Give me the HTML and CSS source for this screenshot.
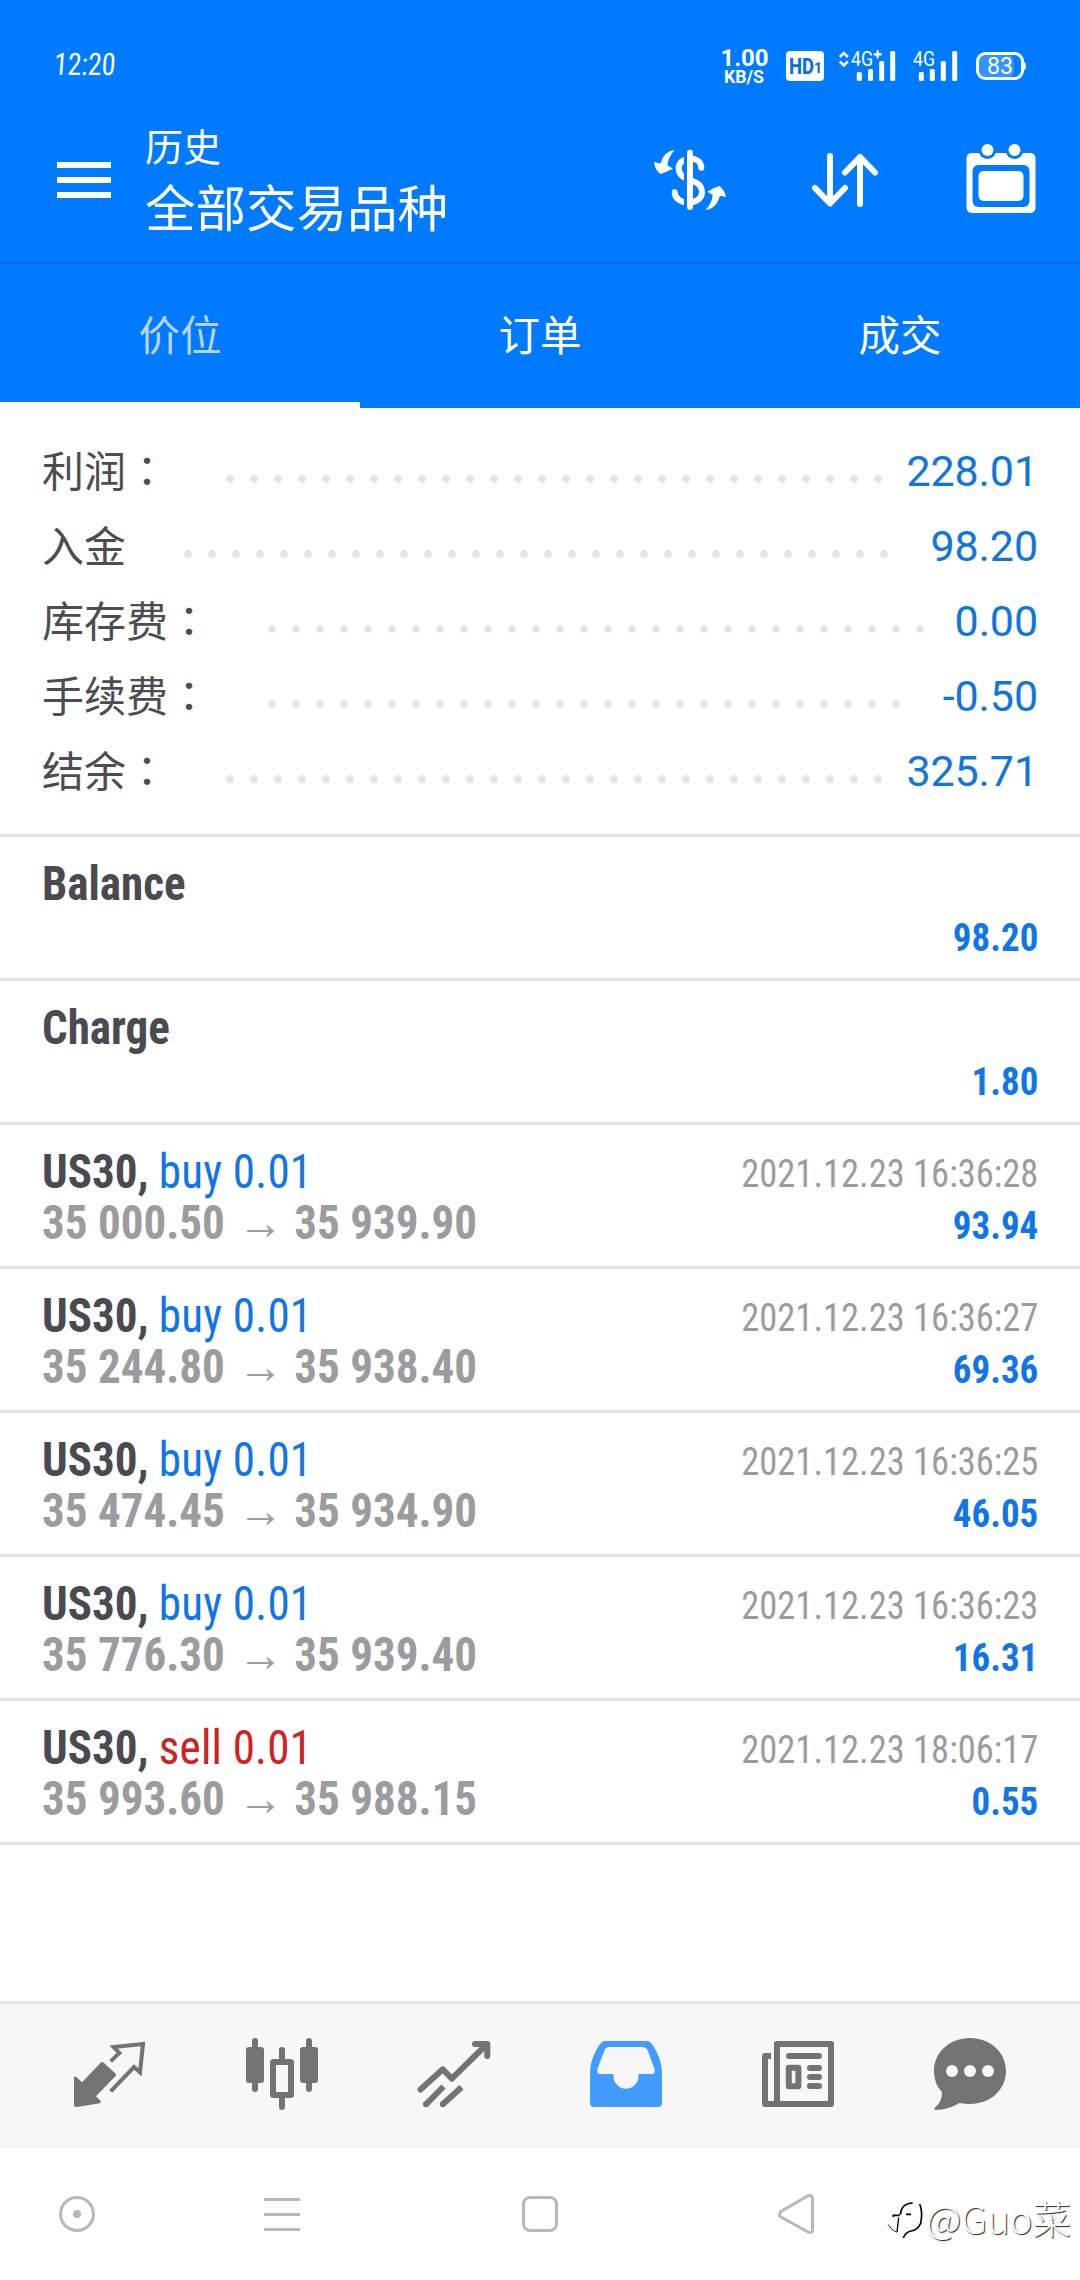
FILE: index.html
```html
<!DOCTYPE html>
<html lang="zh-CN">
<head>
<meta charset="utf-8">
<title>历史</title>
<link rel="stylesheet" href="styles.css">
</head>
<body>
<div class="screen">
  <header class="top">
    <div class="status">
      <span class="clock">12:20</span>
      <svg class="status-icons" width="310" height="50" viewBox="0 0 310 50">
        <g fill="#fff" font-family="Roboto, sans-serif">
          <text x="0.500" y="25.700" font-size="24" font-weight="700" textLength="48">1.00</text>
          <text x="4" y="43" font-size="18" font-weight="700" textLength="40" lengthAdjust="spacingAndGlyphs">KB/S</text>
          <rect x="66" y="11" width="38" height="30" rx="4"/>
          <text x="69" y="33.700" font-size="22" font-weight="800" fill="#0672e0" textLength="25" lengthAdjust="spacingAndGlyphs">HD</text>
          <text x="94" y="32.500" font-size="14" font-weight="800" fill="#0672e0">1</text>
          <path d="M119.800 17l4-4 4 4M119.800 21.500l4 4 4-4" fill="none" stroke="#fff" stroke-width="2.500"/>
          <text x="131" y="25.700" font-size="20" textLength="22" lengthAdjust="spacingAndGlyphs">4G</text>
          <path d="M157.700 10.300v8M153.700 14.300h8" stroke="#fff" stroke-width="2.200"/>
          <rect x="136.800" y="32" width="5" height="9" rx="1.500"/>
          <rect x="148" y="29" width="5" height="12" rx="1.500"/>
          <rect x="159.200" y="21" width="5" height="20" rx="1.500"/>
          <rect x="170.200" y="11" width="5" height="30" rx="1.500"/>
          <text x="193" y="25.700" font-size="20" textLength="22" lengthAdjust="spacingAndGlyphs">4G</text>
          <rect x="198.800" y="32" width="5" height="9" rx="1.500"/>
          <rect x="209.800" y="29" width="5" height="12" rx="1.500"/>
          <rect x="220.800" y="21" width="5" height="20" rx="1.500"/>
          <rect x="232.200" y="11" width="5" height="30" rx="1.500"/>
          <rect x="258" y="14" width="36" height="24" rx="7" opacity=".2"/>
          <rect x="257.500" y="13.500" width="45" height="25" rx="8" fill="none" stroke="#fff" stroke-width="3"/>
          <path d="M304 21.500q2 1 2 4.500t-2 4.500z"/>
          <text x="267" y="33.500" font-size="23" textLength="26" lengthAdjust="spacingAndGlyphs">83</text>
        </g>
      </svg>
    </div>
    <div class="appbar">
      <svg class="menu" width="54" height="36" viewBox="0 0 54 36" fill="#fff"><path d="M0 0h54v6H0zM0 15h54v6H0zM0 30h54v6H0z"/></svg>
      <div class="titles">
        <div class="subtitle">历史</div>
        <div class="title">全部交易品种</div>
      </div>
      <div class="actions">
        <svg width="78" height="78" viewBox="33 18 234 234">
          <path d="M184 98C184 60 116 62 116 100C116 145 186 125 186 172C186 212 106 214 104 172" fill="none" stroke="#fff" stroke-width="18" stroke-linecap="round"/>
          <path d="M132 50h9v170h-9z" fill="#007aff"/>
          <path d="M150 53v163" stroke="#fff" stroke-width="18" stroke-linecap="round"/>
          <path d="M104 45Q72 48 61 86L42 80Q44 105 62 117Q80 110 99 101L82 91Q85 65 104 45ZM197 224Q228 222 240 182L258 186Q254 165 238 153Q220 158 202 170L218 180Q216 205 197 224Z" fill="#fff"/>
        </svg>
        <svg width="78" height="78" viewBox="807 141 78 78" fill="none" stroke="#fff" stroke-width="6" stroke-linecap="round" stroke-linejoin="round">
          <path d="M831 156v47M816 188l15 15.500 15-15.500M861 204v-47M846 172.500l15-15.500 15 15.500"/>
        </svg>
        <svg width="78" height="78" viewBox="961.500 141 78 78">
          <rect x="966" y="153" width="69" height="60" rx="5" fill="#fff"/>
          <g fill="#007aff"><circle cx="987" cy="150" r="9"/><circle cx="1014" cy="150" r="9"/><rect x="972" y="165" width="57" height="42" rx="6"/></g>
          <g fill="#fff"><circle cx="987" cy="150" r="6"/><circle cx="1014" cy="150" r="6"/><rect x="978" y="171" width="45" height="30" rx="5"/></g>
        </svg>
      </div>
    </div>
    <nav class="tabs">
      <a class="tab active">价位</a>
      <a class="tab">订单</a>
      <a class="tab">成交</a>
    </nav>
  </header>

  <section class="summary">
    <div class="sum"><span class="label">利润<span lang="zh-Hant">：</span></span><i class="dots" style="width:672px"></i><span class="num">228.01</span></div>
    <div class="sum"><span class="label">入金</span><i class="dots" style="width:720px"></i><span class="num">98.20</span></div>
    <div class="sum"><span class="label">库存费<span lang="zh-Hant">：</span></span><i class="dots" style="width:672px"></i><span class="num">0.00</span></div>
    <div class="sum"><span class="label">手续费<span lang="zh-Hant">：</span></span><i class="dots" style="width:648px"></i><span class="num">-0.50</span></div>
    <div class="sum"><span class="label">结余<span lang="zh-Hant">：</span></span><i class="dots" style="width:672px"></i><span class="num">325.71</span></div>
  </section>

  <main class="deals">
    <article class="deal"><div class="left"><div><b>Balance</b></div></div><div class="right"><div class="time"></div><div class="profit">98.20</div></div></article>
    <article class="deal"><div class="left"><div><b>Charge</b></div></div><div class="right"><div class="time"></div><div class="profit">1.80</div></div></article>
    <article class="deal"><div class="left"><div><b>US30,</b> <span class="buy">buy 0.01</span></div><div class="price">35 000.50 <span class="to">→</span> 35 939.90</div></div><div class="right"><div class="time">2021.12.23 16:36:28</div><div class="profit">93.94</div></div></article>
    <article class="deal"><div class="left"><div><b>US30,</b> <span class="buy">buy 0.01</span></div><div class="price">35 244.80 <span class="to">→</span> 35 938.40</div></div><div class="right"><div class="time">2021.12.23 16:36:27</div><div class="profit">69.36</div></div></article>
    <article class="deal"><div class="left"><div><b>US30,</b> <span class="buy">buy 0.01</span></div><div class="price">35 474.45 <span class="to">→</span> 35 934.90</div></div><div class="right"><div class="time">2021.12.23 16:36:25</div><div class="profit">46.05</div></div></article>
    <article class="deal"><div class="left"><div><b>US30,</b> <span class="buy">buy 0.01</span></div><div class="price">35 776.30 <span class="to">→</span> 35 939.40</div></div><div class="right"><div class="time">2021.12.23 16:36:23</div><div class="profit">16.31</div></div></article>
    <article class="deal"><div class="left"><div><b>US30,</b> <span class="sell">sell 0.01</span></div><div class="price">35 993.60 <span class="to">→</span> 35 988.15</div></div><div class="right"><div class="time">2021.12.23 18:06:17</div><div class="profit">0.55</div></div></article>
  </main>

  <nav class="bottom">
    <svg viewBox="-39 -39 78 78"><g transform="translate(-50 -46) scale(.33333)">
      <path d="M42 140L48 140L66 157L122 98Q127 94 131 98L167 131Q170 135 166 139L108 199L123 214L120 220L50 231Q42 231 42 224Z" fill="#737373"/>
      <path d="M152 94L178 69L161 51L249 42L240 127L222 111L152 184" fill="none" stroke="#737373" stroke-width="12" stroke-miterlimit="10"/></g></svg>
    <svg viewBox="-39 -39 78 78" fill="none" stroke="#737373" stroke-width="6" stroke-linecap="round"><g fill="#737373" stroke="none"><rect x="-36" y="-29" width="18" height="36" rx="3"/><rect x="18" y="-29" width="18" height="36" rx="3"/></g><path d="M-27-35V13M27-35V13M0-26V-16M0 21V31"/><rect x="-9" y="-14" width="18" height="33" rx=".5" stroke-linejoin="round"/></svg>
    <svg viewBox="-39 -39 78 78" fill="none" stroke="#737373" stroke-width="6" stroke-linejoin="round"><path d="M-33.500 13.500L-11.200-6.700L-2.200 2.700L32-31M21-32H33.300V-20" stroke-linecap="round"/><path d="M-28 28.300L-10.500 10.500M-11.200 28.300L7.500 11.200"/><g fill="#737373" stroke="none"><circle cx="-28" cy="28.300" r="3"/><circle cx="-11.200" cy="28.300" r="3"/></g></svg>
    <svg viewBox="-39 -39 78 78" fill="#429bff"><path fill-rule="evenodd" d="M-36-3C-36-15-30-27-25-33Q-24-35-21-35H21Q24-35 25-33C30-27 36-15 36-3V27Q36 31 32 31H-32Q-36 31-36 27ZM-16-29Q-20-29-21.500-26L-28.500-7Q-29.500-2-26-2H-12.500V0A12.500 12.700 0 0 0 12.500 0V-2H26Q29.500-2 28.500-7L21.500-26Q20-29 16-29Z"/></svg>
    <svg viewBox="-39 -39 78 78" fill="none" stroke="#737373" stroke-width="6" stroke-linejoin="round"><rect x="-21" y="-32" width="54" height="60"/><path d="M-27-20H-33V28H-21"/><path d="M-9-20H21M12-8H21M12 1H21M12 10H21" stroke-linecap="round"/><rect x="-9.200" y="-8.200" width="9.600" height="18.400"/></svg>
    <svg viewBox="-39 -39 78 78" fill="#737373"><path d="M0-38C20-38 36-24 36-5S20 28 0 28Q-5 28-10.500 27Q-22 34-34 34Q-37 33-34.500 31Q-28 26-28 16Q-36 8-36-5C-36-24-20-38 0-38Z"/><g fill="#f7f7f7"><circle cx="-18" cy="-5" r="6"/><circle cy="-5" r="6"/><circle cx="18" cy="-5" r="6"/></g></svg>
  </nav>

  <footer class="sysnav">
    <svg viewBox="-24 -24 48 48"><circle r="16.500"/><circle r="4" fill="#b8b8b8" stroke="none"/></svg>
    <svg viewBox="-24 -24 48 48"><path d="M-18-14.500H18M-18 .5H18M-18 15.500H18"/></svg>
    <svg viewBox="-24 -24 48 48"><rect x="-16.500" y="-16.500" width="33" height="33" rx="6.500"/></svg>
    <svg viewBox="-24 -24 48 48"><path d="M12-18.300Q16.500-19.500 16.500-15V15.500Q16.500 20 12 18L-15 3Q-18 .5-15-2.500Z"/></svg>
    <div class="watermark">
      <svg width="38" height="42" viewBox="32 45 114 126" fill="none" stroke="#000" stroke-width="5"><path d="M75 89Q78 55 112 54M54 96V91H73M92 88H107"/><path d="M133 57Q143 80 136 115Q126 136 107 138Q90 142 84 159" /><path d="M70 98L65 141" stroke-width="4"/><path d="M65 142Q50 138 38 118" stroke-width="2.500"/></svg>
      <span>@Guo菜</span>
    </div>
  </footer>
</div>
</body>
</html>
```

FILE: styles.css
```css
* { box-sizing: border-box; }

body {
  margin: 0;
  background: #fff;
  font-family: Roboto, "Noto Sans CJK SC", sans-serif;
}

.screen {
  display: flex;
  flex-direction: column;
  width: 1080px;
  height: 2280px;
  background: #fefefe;
}

.top { background: #007aff; color: #fff; }

.status {
  display: flex;
  justify-content: space-between;
  align-items: flex-start;
  height: 108px;
  padding: 40px 50px 0 54px;
}

.clock {
  font-size: 31px;
  line-height: 49px;
  font-stretch: 75%;
  transform: skewX(-4deg) scaleX(.9);
  transform-origin: left;
}

.appbar {
  display: flex;
  height: 156px;
  padding: 0 40.5px 0 57px;
  border-bottom: 3px solid #0070ea;
}

.menu { margin: 54px 34px 0 0; }

.titles { font-family: "Noto Sans CJK SC", sans-serif; white-space: nowrap; }
.subtitle { margin-top: 10px; font-size: 38px; line-height: 54px; }
.title { margin-top: 3px; font-size: 50.500px; line-height: 60px; }

.actions {
  display: flex;
  gap: 77.500px;
  margin: 33px 0 0 auto;
}

.tabs { display: grid; grid-template-columns: repeat(3, 1fr); height: 144px; }

.tab {
  font: 41.500px/138px "Noto Sans CJK SC", sans-serif;
  text-align: center;
  border-bottom: 6px solid transparent;
}

.tab.active { color: #b9d3f3; border-bottom-color: #fff; }

.summary { height: 426px; padding: 24px 42px 0; }

.sum { display: flex; align-items: center; height: 75px; }

.label {
  padding-bottom: 2px;
  font: 42px/73px "Noto Sans CJK SC", sans-serif;
  color: #4d4c52;
}

.label [lang] { font-family: "Noto Sans CJK TC", sans-serif; }

.dots {
  height: 12px;
  margin: 18px 0 0 50px;
  background: radial-gradient(circle, #e4e4e4 3.600px, transparent 4.200px) 0 0 / 24px 12px;
}

.num { margin-left: auto; padding-top: 2px; font-size: 43px; letter-spacing: -.1px; color: #0f75e0; }

.deals { flex: 1; }

.deal {
  display: flex;
  justify-content: space-between;
  height: 144px;
  padding: 21px 42px 0;
  border-top: 3px solid #e4e4e4;
  font-stretch: 75%;
  white-space: nowrap;
}

.deal:last-child { height: 147px; border-bottom: 3px solid #e4e4e4; }

.left {
  font-size: 48px;
  line-height: 51px;
  color: #4b4a50;
  transform: scaleX(.938);
  transform-origin: left;
}

.price { font-weight: 700; color: #9b9ba0; }
.to { margin: 0 1px 0 3px; font-family: "Liberation Serif", serif; }
.buy, .sell { letter-spacing: .25px; }
.buy { color: #0f75e8; }
.sell { color: #d02020; }

.right {
  font-size: 39px;
  line-height: 51px;
  text-align: right;
  transform: scaleX(.936);
  transform-origin: right;
  padding-top: 3px;
}

.time { height: 51px; color: #9b9ba0; }
.profit { font-size: 39.500px; font-weight: 700; color: #0f75e8; }

.bottom {
  display: grid;
  grid-template-columns: repeat(6, 172px);
  place-items: center;
  height: 147px;
  padding: 0 24px;
  background: #f7f7f7;
  border-top: 3px solid #e4e4e4;
}

.bottom svg { width: 78px; height: 78px; }

.sysnav {
  position: relative;
  display: grid;
  grid-template-columns: 154px 256px 260px 252px;
  place-items: center;
  height: 132px;
}

.sysnav > svg {
  width: 48px;
  height: 48px;
  fill: none;
  stroke: #b8b8b8;
  stroke-width: 3;
}

.watermark {
  position: absolute;
  right: 9px;
  bottom: 37px;
  display: flex;
  gap: 2px;
  align-items: center;
  font: 300 38.500px/52px "Noto Sans CJK SC", sans-serif;
  color: #fff;
  text-shadow: 1px 1px 1px #222;
}

.watermark svg { margin-top: 8px; }
```
